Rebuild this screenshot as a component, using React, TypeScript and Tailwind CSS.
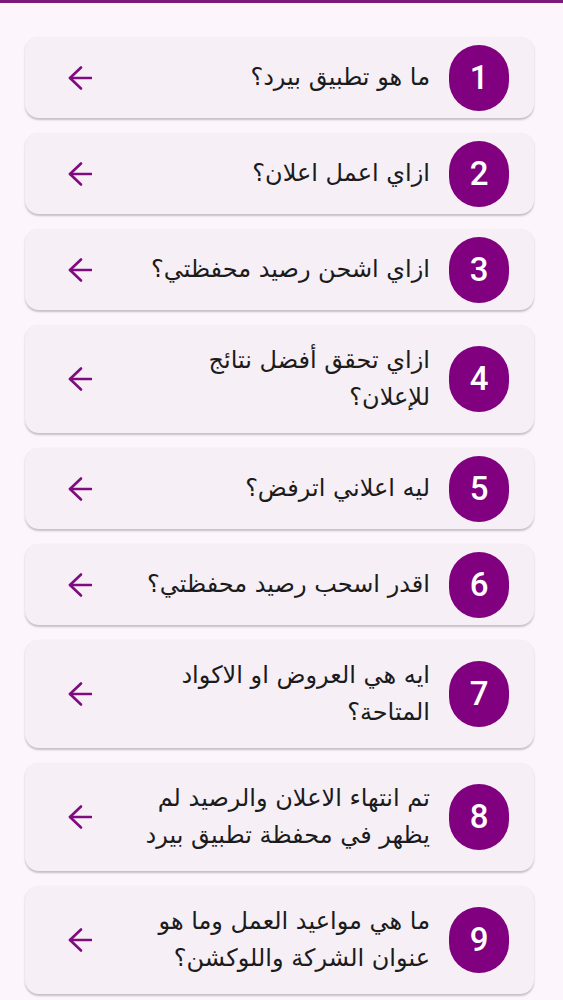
import React from "react";

const questions = [
  "ما هو تطبيق بيرد؟",
  "ازاي اعمل اعلان؟",
  "ازاي اشحن رصيد محفظتي؟",
  "ازاي تحقق أفضل نتائج للإعلان؟",
  "ليه اعلاني اترفض؟",
  "اقدر اسحب رصيد محفظتي؟",
  "ايه هي العروض او الاكواد المتاحة؟",
  "تم انتهاء الاعلان والرصيد لم يظهر في محفظة تطبيق بيرد",
  "ما هي مواعيد العمل وما هو عنوان الشركة واللوكشن؟",
];

function BackArrow() {
  return (
    <svg viewBox="0 0 24 26" className="w-[24px] h-[26px] shrink-0" fill="none" stroke="#7f0c7f" strokeWidth={2.6} strokeLinecap="round" strokeLinejoin="round">
      <path d="M23 13H2" />
      <path d="M13 2.5L2 13l11 10.5" />
    </svg>
  );
}

export default function App() {
  return (
    <div className="min-h-screen bg-[#fcf6fc] border-t-[3px] border-[#7b1a7b]">
      <div className="flex flex-col gap-[15px] pl-[25px] pr-[29px] pt-[34px]" dir="rtl">
        {questions.map((q, i) => (
          <div
            key={i}
            className="flex items-center min-h-[81px] bg-[#f6f0f6] rounded-[14px] shadow-[0_1.5px_2px_rgba(0,0,0,0.22)] pr-[25px] pl-[43px]"
          >
            <div className="w-[60px] h-[66px] shrink-0 rounded-full bg-[#800080] flex items-center justify-center text-white text-[33px] font-medium font-['Roboto',sans-serif]">
              {i + 1}
            </div>
            <div className="flex-1 py-[17px] pr-[19px] pl-[40px] text-[24px] leading-[37px] text-[#1c1b1c] font-['DejaVu_Sans','Noto_Sans',sans-serif]">
              {q}
            </div>
            <BackArrow />
          </div>
        ))}
      </div>
    </div>
  );
}
